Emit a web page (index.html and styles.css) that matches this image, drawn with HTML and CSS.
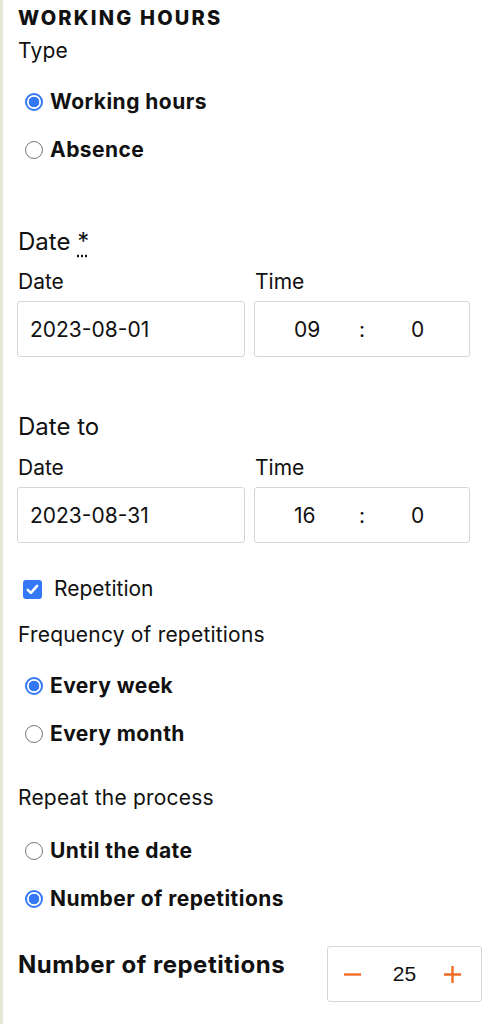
FILE: index.html
```html
<!DOCTYPE html>
<html>
<head>
<meta charset="utf-8">
<link rel="stylesheet" href="styles.css">
</head>
<body>
<div class="panel">
  <h2 class="title">WORKING HOURS</h2>
  <div class="label type">Type</div>
  <div class="radios">
    <label class="radio"><span class="dot on"></span>Working hours</label>
    <label class="radio"><span class="dot"></span>Absence</label>
  </div>

  <div class="section-title sec1">Date <abbr class="req">*</abbr></div>
  <div class="pair">
    <div class="field">
      <div class="small">Date</div>
      <div class="box date">2023-08-01</div>
    </div>
    <div class="field">
      <div class="small">Time</div>
      <div class="box time"><span class="hh">09</span><span class="colon">:</span><span class="mm">0</span></div>
    </div>
  </div>

  <div class="section-title sec2">Date to</div>
  <div class="pair pair2">
    <div class="field">
      <div class="small">Date</div>
      <div class="box date">2023-08-31</div>
    </div>
    <div class="field">
      <div class="small">Time</div>
      <div class="box time"><span class="hh">16</span><span class="colon">:</span><span class="mm">0</span></div>
    </div>
  </div>

  <label class="check"><span class="cb"><svg viewBox="0 0 19 19" width="19" height="19"><path d="M4.8 9.8l3.1 3.1 6.2-7" fill="none" stroke="#fff" stroke-width="2.5" stroke-linecap="round" stroke-linejoin="round"/></svg></span>Repetition</label>

  <div class="label freq">Frequency of repetitions</div>
  <div class="radios">
    <label class="radio"><span class="dot on"></span>Every week</label>
    <label class="radio"><span class="dot"></span>Every month</label>
  </div>

  <div class="label rep">Repeat the process</div>
  <div class="radios rep-radios">
    <label class="radio"><span class="dot"></span>Until the date</label>
    <label class="radio"><span class="dot on"></span>Number of repetitions</label>
  </div>

  <div class="count-row">
    <div class="count-label">Number of repetitions</div>
    <div class="stepper">
      <span class="btn"><svg viewBox="0 0 20 20" width="19" height="19"><path d="M1 10h18" stroke="#ef6b22" stroke-width="2.5"/></svg></span>
      <span class="val">25</span>
      <span class="btn"><svg viewBox="0 0 20 20" width="19" height="19"><path d="M1 10h18M10 1v18" stroke="#ef6b22" stroke-width="2.5"/></svg></span>
    </div>
  </div>
</div>
</body>
</html>
```
FILE: styles.css
```css
html, body {
  margin: 0;
  padding: 0;
  background: #fff;
}
body {
  font-family: Inter, "Noto Sans", sans-serif;
  color: #111;
  border-left: 3px solid #e6e8d6;
  min-height: 1024px;
  box-sizing: border-box;
}
.panel {
  padding: 6px 23px 0 15px;
}
.title {
  margin: 0;
  font-size: 20px;
  font-weight: 800;
  line-height: 24px;
  letter-spacing: 2.2px;
}
.label {
  font-size: 21px;
  line-height: 24px;
  letter-spacing: 0.2px;
}
.type { margin-top: 9px; }
.radios {
  display: flex;
  flex-direction: column;
  gap: 24px;
  margin-top: 27px;
}
.rep-radios { margin-top: 29px; }
.radio {
  display: flex;
  align-items: center;
  font-size: 21px;
  font-weight: 700;
  line-height: 24px;
  height: 24px;
  letter-spacing: 0.45px;
}
.dot {
  width: 18px;
  height: 18px;
  border: 1.5px solid #777;
  border-radius: 50%;
  margin-left: 7px;
  margin-right: 7px;
  box-sizing: border-box;
  flex: none;
}
.dot.on {
  border: 2px solid #3478f6;
  background: radial-gradient(circle, #3478f6 0 5px, #fff 5.6px);
}
.section-title {
  font-size: 24px;
  line-height: 28px;
}
.sec1 { margin-top: 66px; }
.sec2 { margin-top: 56px; }
.req {
  text-decoration: underline dotted;
  text-underline-offset: 5px;
}
.pair {
  display: grid;
  grid-template-columns: 228px 216px;
  gap: 9px;
  margin-top: 14px;
  margin-left: -1px;
}
.pair2 { margin-top: 15px; }
.small {
  font-size: 21px;
  line-height: 24px;
  margin-bottom: 7px;
  margin-left: 1px;
}
.box {
  height: 56px;
  border: 1px solid #d6d6d6;
  border-radius: 3px;
  box-sizing: border-box;
  display: flex;
  align-items: center;
  font-size: 21px;
}
.date { padding-left: 12px; }
.time { padding-left: 39px; }
.hh { width: 65px; }
.colon { width: 52px; }
.check {
  display: flex;
  align-items: center;
  font-size: 21px;
  line-height: 24px;
  margin-top: 34px;
}
.cb {
  width: 19px;
  height: 19px;
  border-radius: 3px;
  background: #3478f6;
  margin-left: 5px;
  margin-right: 12px;
  display: flex;
}
.freq { margin-top: 22px; }
.rep { margin-top: 40px; }
.count-row {
  display: flex;
  justify-content: space-between;
  align-items: flex-start;
  margin-top: 35px;
}
.count-label {
  font-size: 24px;
  font-weight: 700;
  line-height: 28px;
  margin-top: 5px;
  letter-spacing: 0.5px;
}
.stepper {
  width: 155px;
  height: 56px;
  border: 1px solid #d6d6d6;
  border-radius: 3px;
  box-sizing: border-box;
  display: flex;
  align-items: center;
  justify-content: space-between;
  padding: 0 19px 0 15px;
  font-family: "Liberation Sans", Arial, sans-serif;
  font-size: 21px;
  margin-right: -12px;
}
.btn {
  display: flex;
}
.val { margin-left: 4px; }
```
